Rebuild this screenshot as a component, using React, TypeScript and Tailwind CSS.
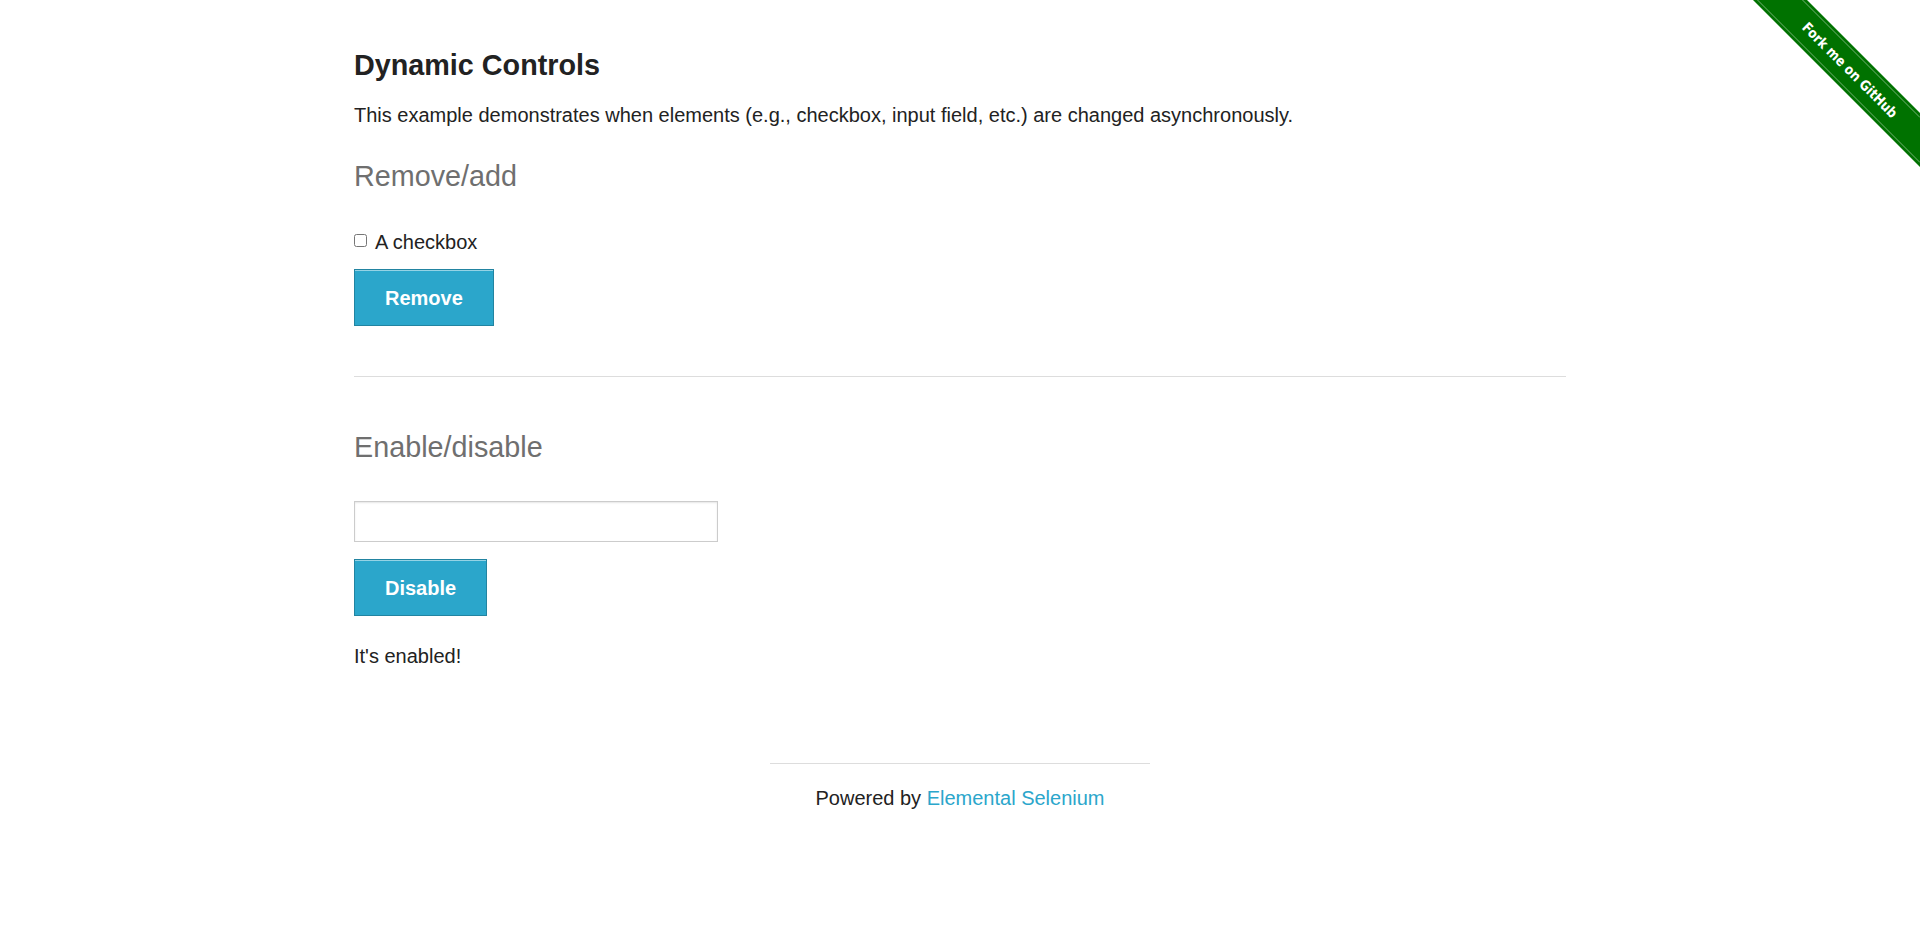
import React from "react";

function Ribbon() {
  return (
    <svg
      className="absolute top-0 right-0"
      width="186"
      height="186"
      viewBox="0 0 186 186"
    >
      <polygon points="19,0 73,0 186,113 186,167" fill="#007200" />
      <line x1="23.5" y1="0" x2="186" y2="162.5" stroke="#ffffff" strokeOpacity="0.45" strokeWidth="1" />
      <line x1="68.5" y1="0" x2="186" y2="117.5" stroke="#ffffff" strokeOpacity="0.45" strokeWidth="1" />
      <text
        x="116"
        y="70"
        transform="rotate(45 116 70)"
        textAnchor="middle"
        dominantBaseline="central"
        fill="#ffffff"
        fontFamily="'DejaVu Sans', 'Liberation Sans', sans-serif"
        fontWeight="bold"
        fontSize="14"
        textLength="128"
        lengthAdjust="spacingAndGlyphs"
      >
        Fork me on GitHub
      </text>
    </svg>
  );
}

export default function App() {
  return (
    <div
      className="relative min-h-screen bg-white text-[#222222]"
      style={{ fontFamily: "'Liberation Sans', Arial, Helvetica, sans-serif" }}
    >
      <Ribbon />
      <div className="max-w-[1250px] mx-auto px-[19px] pt-[48px]">
        <h3 className="text-[28.75px] leading-[34px] font-bold text-[#222222]">
          Dynamic Controls
        </h3>
        <p className="mt-[17px] text-[20px] leading-[32px]">
          This example demonstrates when elements (e.g., checkbox, input field, etc.) are changed asynchronously.
        </p>
        <h4 className="mt-[28px] text-[28.75px] leading-[34px] text-[#6f6f6f]">
          Remove/add
        </h4>
        <div className="mt-[33px] flex items-start text-[20px] leading-[32px]">
          <input
            type="checkbox"
            className="mt-[8px] mr-[8px] w-[13px] h-[13px] m-0"
          />
          <span>A checkbox</span>
        </div>
        <button className="mt-[11px] flex items-center justify-center h-[57px] px-[30px] bg-[#2ba6cb] border border-[#2284a1] shadow-[inset_0_1px_0_rgba(255,255,255,0.5)] text-white font-bold text-[20px] leading-[22px]">
          Remove
        </button>
        <hr className="mt-[50px] border-0 border-t border-[#dddddd]" />
        <h4 className="mt-[53px] text-[28.75px] leading-[34px] text-[#6f6f6f]">
          Enable/disable
        </h4>
        <input
          type="text"
          className="mt-[37px] block w-[364px] h-[41px] border border-[#cccccc] bg-white shadow-[inset_0_1px_2px_rgba(0,0,0,0.1)] outline-none px-[10px] text-[20px]"
        />
        <button className="mt-[17px] flex items-center justify-center h-[57px] px-[30px] bg-[#2ba6cb] border border-[#2284a1] shadow-[inset_0_1px_0_rgba(255,255,255,0.5)] text-white font-bold text-[20px] leading-[22px]">
          Disable
        </button>
        <p className="mt-[24px] text-[20px] leading-[32px]">It's enabled!</p>
      </div>
      <div className="mt-[91px] flex flex-col items-center">
        <div className="w-[380px] border-t border-[#dddddd]" />
        <p className="mt-[18px] text-[20px] leading-[32px] text-center">
          Powered by{" "}
          <a href="#" className="text-[#2ba6cb]">
            Elemental Selenium
          </a>
        </p>
      </div>
    </div>
  );
}
